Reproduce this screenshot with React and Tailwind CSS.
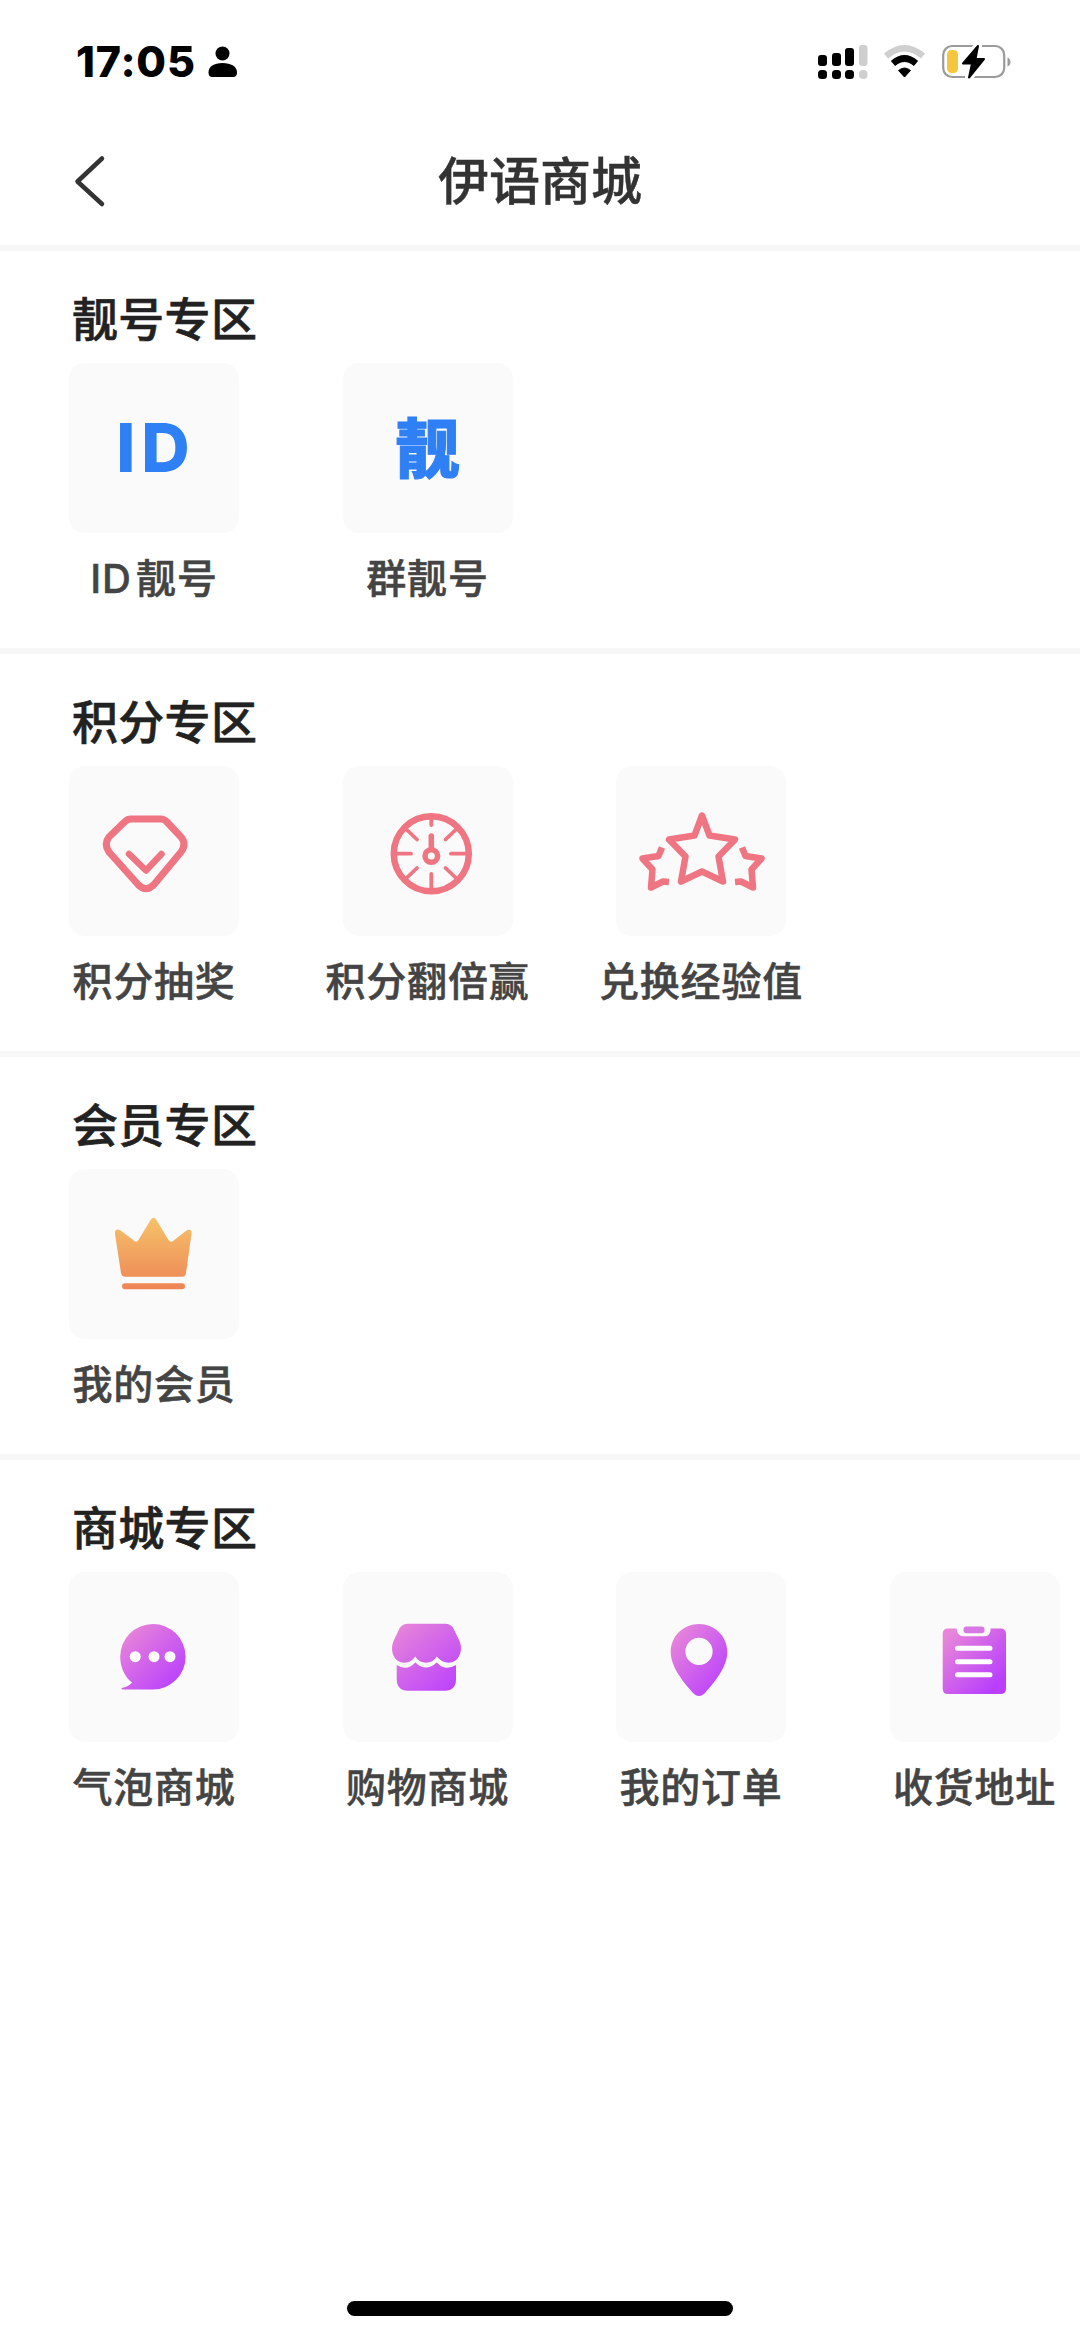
function StatusBar() {
    return (
        <div className="flex h-[124px] items-center justify-between pl-[76px] pr-[68px]">
            <div className="flex items-center gap-[12px]">
                <span className="pb-[1px] font-['Inter',sans-serif] text-[43px] font-extrabold leading-none tracking-[0.8px] text-black">
                    17:05
                </span>
                <svg width="30" height="32" viewBox="0 0 30 32">
                    <circle cx="14.5" cy="7.500" r="7" />
                    <path d="M0.5 26.500C0.5 20.500 6 17 14.5 17S29 20.500 29 26.500Q29 31 25 31H4.500Q0.500 31 0.500 26.500Z" />
                </svg>
            </div>

            <div className="flex items-center">
                {/* dual sim signal */}
                <svg width="50" height="36" viewBox="0 0 50 36">
                    <rect x="0" y="11" width="9" height="11" rx="3" />
                    <rect x="14" y="9" width="9" height="13" rx="3" />
                    <rect x="27" y="4" width="9" height="18" rx="3" />
                    <rect x="41" y="1" width="8.500" height="21" rx="3" fill="#cfcfcf" />
                    <rect x="0" y="26" width="9" height="9" rx="3.500" />
                    <rect x="14" y="26" width="9" height="9" rx="3.500" />
                    <rect x="27" y="26" width="9" height="9" rx="3.500" />
                    <rect x="41" y="26" width="8.500" height="9" rx="4" fill="#cfcfcf" />
                </svg>
                <svg className="ml-[15px]" width="44" height="36" viewBox="0 0 44 36" fill="none">
                    <path d="M3 12Q21.500 -3.500 40 12" stroke="#cfcfcf" strokeWidth="6.500" />
                    <path d="M10 19.500Q21.500 9.500 33 19.500" stroke="#000" strokeWidth="6.500" />
                    <path d="M15.500 26.500Q21.500 21.500 27.500 26.500L21.500 33Z" fill="#000" stroke="#000" strokeLinejoin="round" />
                </svg>
                <svg className="ml-[15px]" width="70" height="36" viewBox="0 0 70 36">
                    <rect x="1.200" y="2" width="61" height="31" rx="9" fill="none" stroke="#9b9b9b" strokeWidth="2.200" />
                    <path d="M65.500 13.500Q68.500 14.500 68.500 18T65.500 22.500Z" fill="#9b9b9b" />
                    <rect x="5" y="6" width="11" height="23" rx="4.500" fill="#f5c63c" />
                    <path
                        d="M36 2L21 19.500H30L27 33.500L42 15H33.500Z"
                        stroke="#fff"
                        strokeWidth="8"
                        strokeLinejoin="round"
                    />
                    <path d="M36 2L21 19.500H30L27 33.500L42 15H33.500Z" stroke="#000" strokeWidth="2" strokeLinejoin="round" />
                </svg>
            </div>
        </div>
    )
}

function Header() {
    return (
        <div className="grid h-[121px] grid-cols-3 items-center pb-[7px]">
            <svg className="ml-[73px]" width="34" height="54" viewBox="0 0 34 54" fill="none">
                <path d="M29 4.500L4.500 27.500L29 50" stroke="#333" strokeWidth="4.500" strokeLinecap="round" strokeLinejoin="round" />
            </svg>
            <h1 className="pb-[6px] text-center text-[51px] font-medium leading-none text-[#333] [-webkit-text-stroke:0.4px]">
                伊语商城
            </h1>
        </div>
    )
}

function Gradient({ id, from, to }) {
    return (
        <linearGradient id={id} x1="0" y1="0" x2="1" y2="1">
            <stop offset="0.1" stopColor={from} />
            <stop offset="0.85" stopColor={to} />
        </linearGradient>
    )
}

// every icon is drawn on the same 170x170 tile
function Icon({ children }) {
    return (
        <svg className="size-[170px]" viewBox="0 0 170 170" fill="none">
            {children}
        </svg>
    )
}

function DiamondIcon() {
    return (
        <Icon>
            <g stroke="#ee7581" strokeLinecap="round" strokeLinejoin="round">
                <path
                    strokeWidth="7"
                    d="M62 53H92Q95 53 97.500 55.500L112 71Q118 78 112 86L85 118.500Q77 127 69 118.500L40 86Q34.500 78 40 71L56 55.500Q58.500 53 62 53Z"
                />
                <path strokeWidth="6.500" d="M60 88L77 104.500L92.500 88" />
            </g>
        </Icon>
    )
}

function GaugeIcon() {
    return (
        <Icon>
            <g stroke="#ee7581">
                <circle cx="88.300" cy="87.700" r="37.500" strokeWidth="6.500" />
                <path
                    strokeWidth="3.800"
                    strokeLinecap="round"
                    d="M88.300 51V59M88.300 108V123M54 87.700H68M108 87.700H123M63 63L74 73.500M113.500 63L102.500 73.500M63 112.500L74 102M113.500 112.500L102.500 102"
                />
                <path strokeWidth="5.500" strokeLinecap="round" d="M88.300 70V83" />
                <circle cx="88.300" cy="90" r="6.300" strokeWidth="5.500" />
            </g>
        </Icon>
    )
}

function StarsIcon() {
    return (
        <Icon>
            <g stroke="#ee7581" strokeWidth="6.500" strokeLinejoin="round">
                <path d="M86 49.500L93.500 69.500L119 73.500L102.500 90.500L107 115.500L86 105.500L65 115.500L69.500 90.500L53 73.500L78.500 69.500Z" />
                <path d="M46 81.500L42.500 90L26.500 92.500L36.500 103.500L35 121.500L47 115.500L53 116" />
                <path d="M126 81.500L129.500 90L145.500 92.500L135.500 103.500L137 121.500L125 115.500L119 116" />
            </g>
        </Icon>
    )
}

function CrownIcon() {
    return (
        <Icon>
            <defs>
                <linearGradient id="crown" gradientUnits="userSpaceOnUse" x1="84" y1="48" x2="84" y2="120">
                    <stop stopColor="#f5c36b" />
                    <stop offset="1" stopColor="#ee8555" />
                </linearGradient>
            </defs>
            <path
                fill="url(#crown)"
                d="M46 65Q45.500 59 51 61L65.500 72Q67.700 74 69.500 71L81.500 51Q84.500 46.500 87.500 51L99.500 71Q101.500 74 104 72L117.500 61.500Q123 59 122.500 65L117 104Q116.500 107.700 113 107.700H56Q52.700 107.700 52 104Z"
            />
            <rect x="53" y="114.300" width="63" height="6" rx="3" fill="url(#crown)" />
        </Icon>
    )
}

function BubbleIcon() {
    return (
        <Icon>
            <defs>
                <Gradient id="bubble" from="#e785d9" to="#bd45fb" />
            </defs>
            <path
                fill="url(#bubble)"
                d="M84 117.400H53.500Q51.500 116.500 53.500 115.800Q60 114.500 63 110.500C55.500 104.500 51.200 95 51.200 84.700A32.700 32.700 0 1 1 84 117.400Z"
            />
            <g fill="#fff">
                <circle cx="66.200" cy="84.700" r="5.500" />
                <circle cx="85" cy="84.700" r="5.500" />
                <circle cx="101" cy="84.700" r="5.500" />
            </g>
        </Icon>
    )
}

function StoreIcon() {
    return (
        <Icon>
            <defs>
                <linearGradient id="store" gradientUnits="userSpaceOnUse" x1="54" y1="54" x2="108" y2="116">
                    <stop stopColor="#e785d9" />
                    <stop offset="1" stopColor="#bd45fb" />
                </linearGradient>
            </defs>
            <g fill="url(#store)">
                <path d="M65 51.700H102Q108 51.700 110.500 56.500L116.500 69C120.500 79 116 90.700 105.500 90.700Q99 90.700 93.700 84.500Q90 90.700 83 90.700T72.300 84.500Q68 90.700 61.500 90.700C51 90.700 46.500 79 50.500 69L56.500 56.500Q59 51.700 65 51.700Z" />
                <path d="M53.700 93Q64 99.500 72.300 90.500Q83 100.500 93.700 90.500Q102 99.500 113 93V107Q113 118.700 102 118.700H65Q53.700 118.700 53.700 107Z" />
            </g>
        </Icon>
    )
}

function PinIcon() {
    return (
        <Icon>
            <defs>
                <Gradient id="pin" from="#e785d9" to="#bd45fb" />
            </defs>
            <path
                fill="url(#pin)"
                fillRule="evenodd"
                d="M83 52C98.500 52 111.300 64 111.300 80C111.300 95 98 111 88.500 121.500Q83 126.500 77.500 121.500C68 111 54.700 95 54.700 80C54.700 64 67.500 52 83 52ZM83 65.800A13.600 13.600 0 1 0 83 93A13.600 13.600 0 1 0 83 65.800Z"
            />
        </Icon>
    )
}

function ClipboardIcon() {
    return (
        <Icon>
            <defs>
                <Gradient id="clipboard" from="#e785d9" to="#b93ffc" />
            </defs>
            <path
                fill="url(#clipboard)"
                d="M58 56.500H66.500Q67.500 64.300 73 64.300H95Q100.500 64.300 100.700 56.500H110.500Q116 56.500 116 62V116.500Q116 122 110.500 122H58Q52.700 122 52.700 116.500V62Q52.700 56.500 58 56.500Z"
            />
            <rect x="73.500" y="54.500" width="21" height="6.800" rx="3" fill="#d878e2" />
            <path stroke="#fff" strokeWidth="5" strokeLinecap="round" d="M67.500 76.300H100M67.500 89.700H100M67.500 102.700H100" />
        </Icon>
    )
}

const sections = [
    {
        title: "靓号专区",
        items: [
            {
                label: "ID 靓号",
                icon: (
                    <span className="pb-[2px] pl-[4px] font-['Inter',sans-serif] text-[67px] font-extrabold leading-none tracking-[6px] text-[#2f7ff5]">
                        ID
                    </span>
                ),
            },
            {
                label: "群靓号",
                icon: (
                    <span className="pb-[8px] text-[64px] font-black leading-none text-[#2f7ff5] [-webkit-text-stroke:1px]">
                        靓
                    </span>
                ),
            },
        ],
    },
    {
        title: "积分专区",
        items: [
            { label: "积分抽奖", icon: <DiamondIcon /> },
            { label: "积分翻倍赢", icon: <GaugeIcon /> },
            { label: "兑换经验值", icon: <StarsIcon /> },
        ],
    },
    {
        title: "会员专区",
        items: [{ label: "我的会员", icon: <CrownIcon /> }],
    },
    {
        title: "商城专区",
        items: [
            { label: "气泡商城", icon: <BubbleIcon /> },
            { label: "购物商城", icon: <StoreIcon /> },
            { label: "我的订单", icon: <PinIcon /> },
            { label: "收货地址", icon: <ClipboardIcon /> },
        ],
    },
]

function Section({ title, items }) {
    return (
        <section className="h-[403px] border-t-[6px] border-[#f7f7f7] pl-[50px] pt-[40px]">
            <h2 className="pl-[22px] text-[46px] font-medium leading-[50px] tracking-[0.3px] text-[#222] [-webkit-text-stroke:0.6px]">
                {title}
            </h2>
            <div className="mt-[22px] flex gap-[65.500px]">
                {items.map((item) => (
                    <div key={item.label} className="flex w-[208px] shrink-0 flex-col items-center">
                        <div className="flex size-[170px] items-center justify-center rounded-2xl bg-[#fafafa]">
                            {item.icon}
                        </div>
                        <div className="mt-[22px] whitespace-nowrap font-['Inter','Noto_Sans_CJK_SC',sans-serif] text-[40px] font-medium leading-[48px] tracking-[0.8px] text-[#444] [-webkit-text-stroke:0.5px] [word-spacing:-7px]">
                            {item.label}
                        </div>
                    </div>
                ))}
            </div>
        </section>
    )
}

export default function App() {
    return (
        <div className="flex h-[2339px] w-[1080px] flex-col overflow-hidden bg-white font-['Noto_Sans_CJK_SC',sans-serif]">
            <StatusBar />
            <Header />
            <main>
                {sections.map((section) => (
                    <Section key={section.title} title={section.title} items={section.items} />
                ))}
            </main>
            <div className="mx-auto mb-[23px] mt-auto h-[15px] w-[386px] rounded-full bg-black"></div>
        </div>
    )
}
